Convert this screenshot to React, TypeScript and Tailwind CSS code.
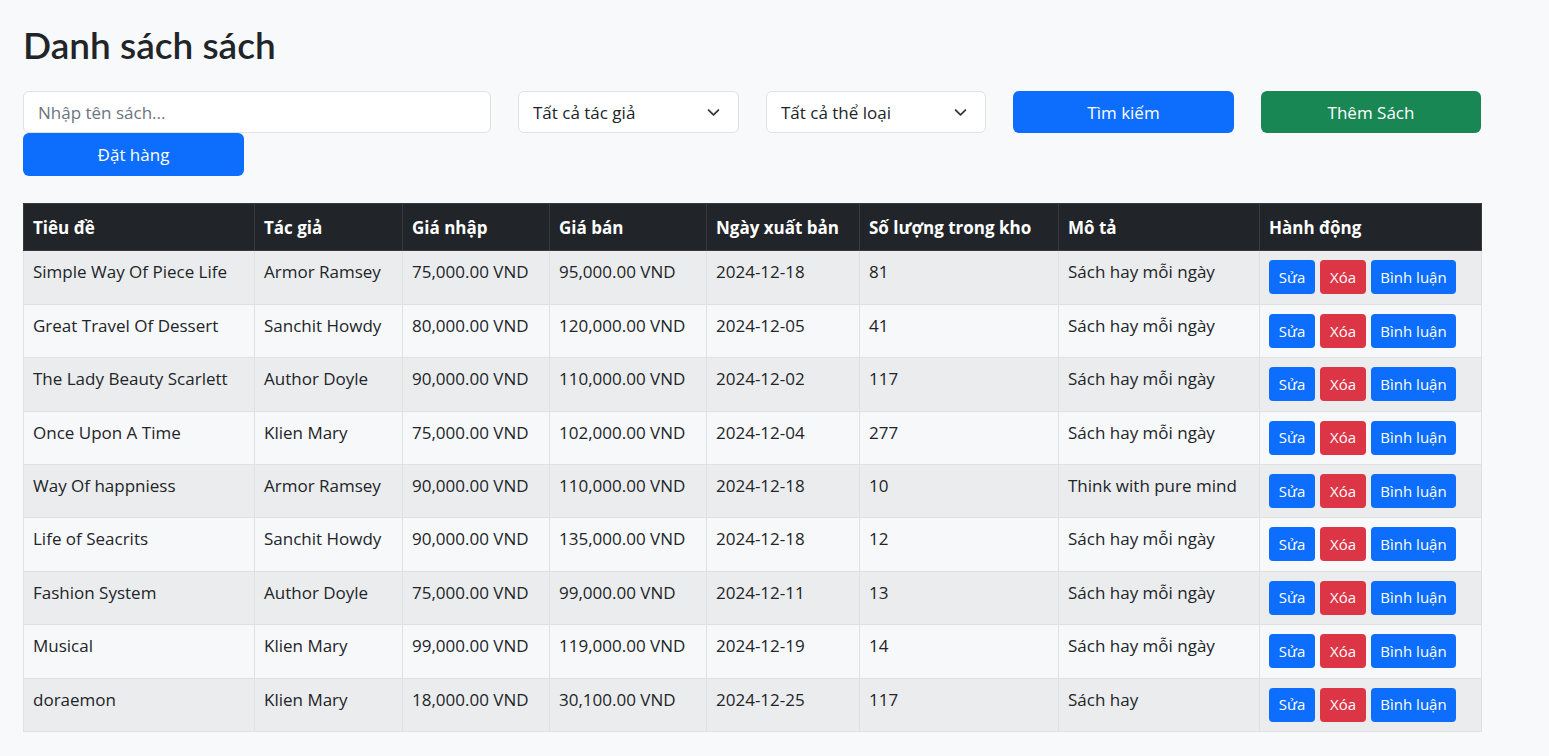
import React from "react";

interface Book {
  title: string;
  author: string;
  importPrice: string;
  salePrice: string;
  date: string;
  stock: number;
  description: string;
}

const books: Book[] = [
  { title: "Simple Way Of Piece Life", author: "Armor Ramsey", importPrice: "75,000.00 VND", salePrice: "95,000.00 VND", date: "2024-12-18", stock: 81, description: "Sách hay mỗi ngày" },
  { title: "Great Travel Of Dessert", author: "Sanchit Howdy", importPrice: "80,000.00 VND", salePrice: "120,000.00 VND", date: "2024-12-05", stock: 41, description: "Sách hay mỗi ngày" },
  { title: "The Lady Beauty Scarlett", author: "Author Doyle", importPrice: "90,000.00 VND", salePrice: "110,000.00 VND", date: "2024-12-02", stock: 117, description: "Sách hay mỗi ngày" },
  { title: "Once Upon A Time", author: "Klien Mary", importPrice: "75,000.00 VND", salePrice: "102,000.00 VND", date: "2024-12-04", stock: 277, description: "Sách hay mỗi ngày" },
  { title: "Way Of happniess", author: "Armor Ramsey", importPrice: "90,000.00 VND", salePrice: "110,000.00 VND", date: "2024-12-18", stock: 10, description: "Think with pure mind" },
  { title: "Life of Seacrits", author: "Sanchit Howdy", importPrice: "90,000.00 VND", salePrice: "135,000.00 VND", date: "2024-12-18", stock: 12, description: "Sách hay mỗi ngày" },
  { title: "Fashion System", author: "Author Doyle", importPrice: "75,000.00 VND", salePrice: "99,000.00 VND", date: "2024-12-11", stock: 13, description: "Sách hay mỗi ngày" },
  { title: "Musical", author: "Klien Mary", importPrice: "99,000.00 VND", salePrice: "119,000.00 VND", date: "2024-12-19", stock: 14, description: "Sách hay mỗi ngày" },
  { title: "doraemon", author: "Klien Mary", importPrice: "18,000.00 VND", salePrice: "30,100.00 VND", date: "2024-12-25", stock: 117, description: "Sách hay" },
];

const headers = [
  { label: "Tiêu đề", w: "w-[231px]" },
  { label: "Tác giả", w: "w-[148px]" },
  { label: "Giá nhập", w: "w-[147px]" },
  { label: "Giá bán", w: "w-[157px]" },
  { label: "Ngày xuất bản", w: "w-[153px]" },
  { label: "Số lượng trong kho", w: "w-[199px]" },
  { label: "Mô tả", w: "w-[201px]" },
  { label: "Hành động", w: "w-[222px]" },
];

function Chevron() {
  return (
    <svg width="13" height="13" viewBox="0 0 16 16" fill="none" stroke="#343a40" strokeWidth="2.2" strokeLinecap="round" strokeLinejoin="round">
      <path d="m2 5 6 6 6-6" />
    </svg>
  );
}

const cell = "border border-[#dee2e6] px-[9px] pt-[9px] align-top leading-6";

export default function App() {
  return (
    <div className="min-h-screen bg-[#f8f9fa] text-[#212529] font-['Open_Sans',sans-serif]">
      <div className="px-[23px] pt-[23px]">
        <h1 className="mb-[24px] font-['Lato',sans-serif] text-[37px] font-semibold leading-[1.2]">Danh sách sách</h1>

        <div className="flex w-[1458px] gap-[27px]">
          <input
            className="h-[42px] w-[468px] rounded-md border border-[#dee2e6] bg-white px-[14px] text-[17px] placeholder:text-[#6c757d] outline-none"
            placeholder="Nhập tên sách..."
          />
          <div className="flex h-[42px] w-[221px] items-center justify-between rounded-md border border-[#dee2e6] bg-white pl-[14px] pr-[18px] text-[17px]">
            <span>Tất cả tác giả</span>
            <Chevron />
          </div>
          <div className="flex h-[42px] w-[220px] items-center justify-between rounded-md border border-[#dee2e6] bg-white pl-[14px] pr-[18px] text-[17px]">
            <span>Tất cả thể loại</span>
            <Chevron />
          </div>
          <button className="h-[42px] w-[221px] rounded-md bg-[#0d6efd] text-[17px] text-white">Tìm kiếm</button>
          <button className="h-[42px] w-[220px] rounded-md bg-[#198754] text-[17px] text-white">Thêm Sách</button>
        </div>
        <button className="h-[43px] w-[221px] rounded-md bg-[#0d6efd] text-[17px] text-white">Đặt hàng</button>

        <table className="mt-[27px] w-[1458px] table-fixed border-collapse text-[17px]">
          <thead>
            <tr className="bg-[#212529] text-white">
              {headers.map((h) => (
                <th key={h.label} className={`${h.w} h-[47px] border border-[#373b3e] px-[9px] text-left font-bold`}>
                  {h.label}
                </th>
              ))}
            </tr>
          </thead>
          <tbody>
            {books.map((b, i) => (
              <tr key={b.title} className={i % 2 === 0 ? "bg-[#ebeced]" : "bg-[#f7f8f9]"}>
                <td className={`h-[53.4px] ${cell}`}>{b.title}</td>
                <td className={cell}>{b.author}</td>
                <td className={cell}>{b.importPrice}</td>
                <td className={cell}>{b.salePrice}</td>
                <td className={cell}>{b.date}</td>
                <td className={cell}>{b.stock}</td>
                <td className={cell}>{b.description}</td>
                <td className="border border-[#dee2e6] px-[9px] pt-[9px] align-top">
                  <div className="flex gap-[5px]">
                    <button className="h-[34px] w-[46px] rounded bg-[#0d6efd] text-[15px] text-white">Sửa</button>
                    <button className="h-[34px] w-[46px] rounded bg-[#dc3545] text-[15px] text-white">Xóa</button>
                    <button className="h-[34px] w-[85px] rounded bg-[#0d6efd] text-[15px] text-white">Bình luận</button>
                  </div>
                </td>
              </tr>
            ))}
          </tbody>
        </table>
      </div>
    </div>
  );
}
